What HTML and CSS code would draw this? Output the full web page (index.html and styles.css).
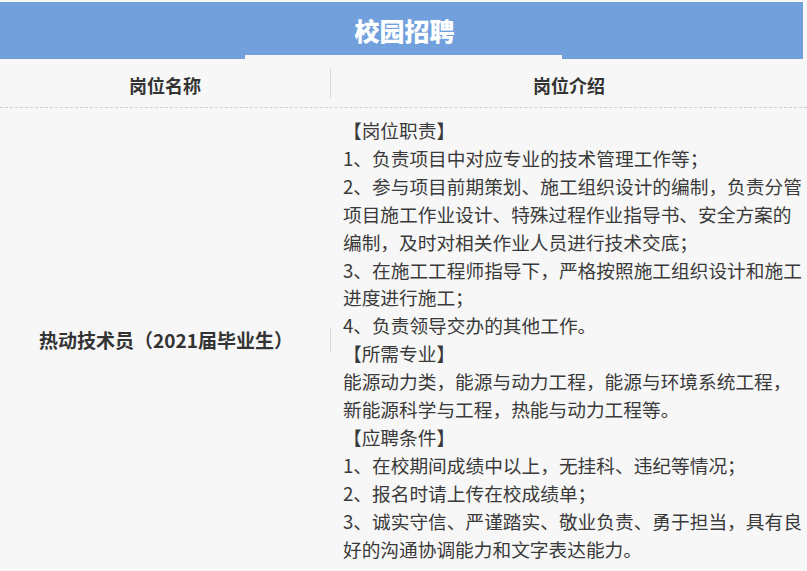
FILE: index.html
```html
<!DOCTYPE html>
<html lang="zh-CN">
<head>
<meta charset="utf-8">
<title>校园招聘</title>
<link rel="stylesheet" href="styles.css">
</head>
<body>
<div class="page">
  <div class="banner">
    <div class="banner-main"><h1 class="banner-title">校园招聘</h1></div>
    <div class="banner-foot">
      <div class="seg seg-blue"></div>
      <div class="seg"></div>
      <div class="seg seg-blue"></div>
    </div>
  </div>
  <div class="row head-row">
    <div class="cell head-cell">岗位名称</div>
    <div class="divider head-divider"></div>
    <div class="cell head-cell">岗位介绍</div>
  </div>
  <div class="row body-row">
    <div class="cell name-cell">热动技术员（2021届毕业生）</div>
    <div class="divider body-divider"></div>
    <div class="cell desc-cell">
      <p class="line">【岗位职责】</p>
      <p class="line">1、负责项目中对应专业的技术管理工作等；</p>
      <p class="line">2、参与项目前期策划、施工组织设计的编制，负责分管</p>
      <p class="line">项目施工作业设计、特殊过程作业指导书、安全方案的</p>
      <p class="line">编制，及时对相关作业人员进行技术交底；</p>
      <p class="line">3、在施工工程师指导下，严格按照施工组织设计和施工</p>
      <p class="line">进度进行施工；</p>
      <p class="line">4、负责领导交办的其他工作。</p>
      <p class="line">【所需专业】</p>
      <p class="line">能源动力类，能源与动力工程，能源与环境系统工程，</p>
      <p class="line">新能源科学与工程，热能与动力工程等。</p>
      <p class="line">【应聘条件】</p>
      <p class="line">1、在校期间成绩中以上，无挂科、违纪等情况；</p>
      <p class="line">2、报名时请上传在校成绩单；</p>
      <p class="line">3、诚实守信、严谨踏实、敬业负责、勇于担当，具有良</p>
      <p class="line">好的沟通协调能力和文字表达能力。</p>
    </div>
  </div>
</div>
</body>
</html>
```

FILE: styles.css
```css
html, body {
  margin: 0;
  padding: 0;
  background: #f7f7f7;
}
body {
  font-family: "Noto Sans CJK SC", "Noto Sans", sans-serif;
  color: #383838;
  overflow: hidden;
}
.page {
  width: 807px;
  padding-top: 2px;
}
.banner {
  width: 803px;
}
.banner-main {
  height: 53px;
  background: #71a0dd;
  display: flex;
  align-items: center;
  justify-content: center;
}
.banner-title {
  margin: 3px 0 0 6px;
  font-size: 25px;
  font-weight: 900;
  color: #ffffff;
  line-height: 1;
}
.banner-foot {
  display: grid;
  grid-template-columns: 245px 317px 1fr;
  height: 4px;
}
.seg { background: transparent; }
.seg-blue { background: #71a0dd; }
.row {
  display: grid;
  grid-template-columns: 330px 1px 1fr;
  align-items: center;
}
.head-row {
  height: 48px;
  border-bottom: 1px dashed #cfcfcf;
}
.head-cell {
  text-align: center;
  font-size: 18px;
  font-weight: 700;
  color: #333;
  padding-top: 4px;
}
.divider {
  width: 1px;
  background: #d8d8d8;
}
.head-divider { height: 30px; }
.body-divider { height: 25px; }
.body-row {
  padding: 8px 0 21px 0;
}
.name-cell {
  text-align: center;
  font-size: 19px;
  font-weight: 700;
  color: #333;
  padding-left: 2px;
}
.desc-cell {
  padding-left: 12px;
  font-size: 18.7px;
  line-height: 27.9px;
  color: #3a3a3a;
}
.line {
  margin: 0;
  white-space: nowrap;
}
```
